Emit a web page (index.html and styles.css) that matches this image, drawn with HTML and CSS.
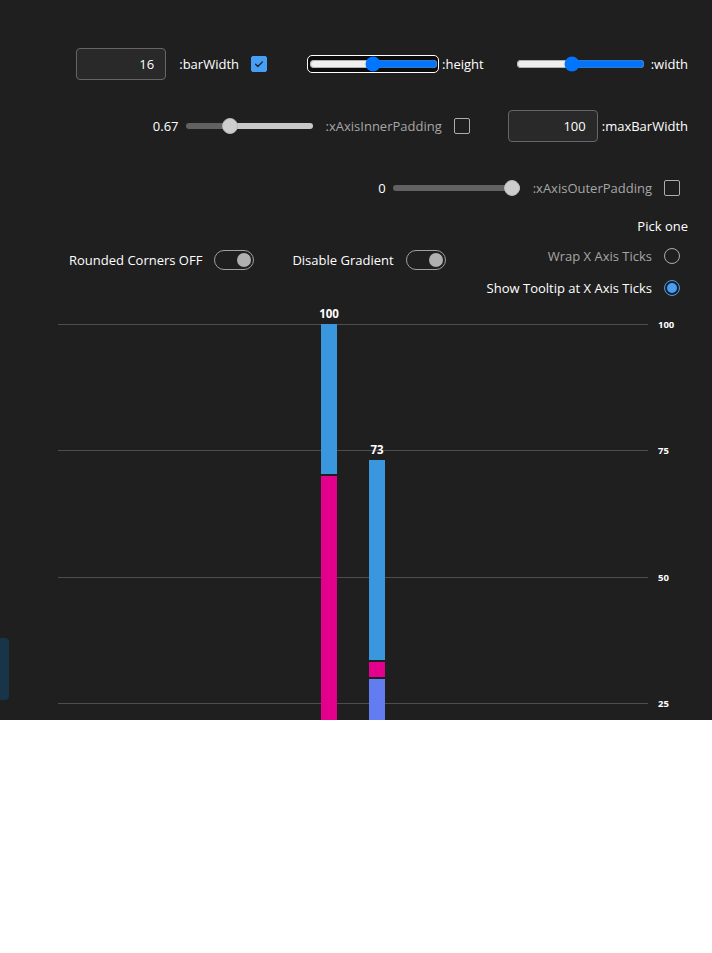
FILE: index.html
```html
<!DOCTYPE html>
<html lang="en" dir="rtl">
<head>
<meta charset="utf-8">
<title>Vertical stacked bar chart</title>
<link rel="stylesheet" href="styles.css">
</head>
<body>
<div class="page">
  <div class="controls">
    <div class="row row1">
      <div class="grp grp-w">
        <span class="lbl">width:</span>
        <input class="range" type="range" min="0" max="100" value="57">
      </div>
      <div class="grp grp-h">
        <span class="lbl">height:</span>
        <span class="focusring"><input class="range" type="range" min="0" max="100" value="50"></span>
      </div>
      <div class="grp grp-cb">
        <span class="cb checked"><svg viewBox="0 0 16 16" width="16" height="16"><path d="M4.6 8.3 L6.9 10.5 L11.4 5.9" fill="none" stroke="#1f1f1f" stroke-width="1.3" stroke-linecap="round" stroke-linejoin="round"/></svg></span>
        <span class="lbl">barWidth:</span>
        <input class="tf" type="text" value="16">
      </div>
    </div>

    <div class="row row2">
      <div class="grp">
        <span class="lbl">maxBarWidth:</span>
        <input class="tf" type="text" value="100">
      </div>
      <div class="grp grp-cb">
        <span class="cb"></span>
        <span class="lbl dim">xAxisInnerPadding:</span>
        <div class="fslider" style="--pos:44.6px"><div class="rail"></div><div class="thumb"></div></div>
        <span class="val">0.67</span>
      </div>
    </div>

    <div class="row row3">
      <div class="grp grp-cb">
        <span class="cb"></span>
        <span class="lbl dim">xAxisOuterPadding:</span>
        <div class="fslider" style="--pos:119px"><div class="rail"></div><div class="thumb"></div></div>
        <span class="val">0</span>
      </div>
    </div>

    <div class="row4">
      <div class="radiogroup">
        <div class="rg-label">Pick one</div>
        <div class="radio-opt">
          <span class="radio"></span>
          <span class="lbl dim">Wrap X Axis Ticks</span>
        </div>
        <div class="radio-opt">
          <span class="radio checked"><span class="dot"></span></span>
          <span class="lbl">Show Tooltip at X Axis Ticks</span>
        </div>
      </div>
      <div class="toggle toggle-first">
        <span class="switch"><span class="knob"></span></span>
        <span class="lbl">Disable Gradient</span>
      </div>
      <div class="toggle">
        <span class="switch"><span class="knob"></span></span>
        <span class="lbl">Rounded Corners OFF</span>
      </div>
    </div>
  </div>

  <svg class="chart" width="712" height="416" viewBox="0 0 712 416">
    <g class="grid">
      <line x1="58" y1="20.5" x2="648" y2="20.5"/>
      <line x1="58" y1="146.5" x2="648" y2="146.5"/>
      <line x1="58" y1="273.5" x2="648" y2="273.5"/>
      <line x1="58" y1="399.5" x2="648" y2="399.5"/>
    </g>
    <g class="yticks">
      <text x="658" y="20.5">100</text>
      <text x="658" y="146.5">75</text>
      <text x="658" y="273.5">50</text>
      <text x="658" y="399.5">25</text>
    </g>
    <g class="bar">
      <rect x="321" y="20" width="16" height="150" fill="#3a96dd"/>
      <rect x="321" y="172" width="16" height="244" fill="#e3008c"/>
    </g>
    <g class="bar">
      <rect x="369" y="156" width="16" height="200" fill="#3a96dd"/>
      <rect x="369" y="358" width="16" height="15" fill="#e3008c"/>
      <rect x="369" y="375" width="16" height="41" fill="#637cef"/>
    </g>
    <g class="barlabels">
      <text x="329" y="9">100</text>
      <text x="377" y="145">73</text>
    </g>
  </svg>

  <div class="sidetab"></div>
</div>
</body>
</html>
```

FILE: styles.css
```css
body {
  margin: 0;
  background: #ffffff;
  font-family: "Open Sans", "Noto Sans", sans-serif;
  font-size: 13px;
  line-height: 20px;
  color: #ffffff;
}

.page {
  position: relative;
  height: 720px;
  overflow: hidden;
  background: #1f1f1f;
}

.controls {
  padding: 48px 24px 0;
}

.row {
  display: flex;
  align-items: center;
  height: 32px;
  margin-bottom: 30px;
}

.row1 { gap: 32px; }
.row1 .grp-cb { margin-inline-start: 8px; }
.row2 { gap: 38px; }
.row3 { margin-bottom: 12px; padding-inline-start: 8px; }
.row3 .fslider { margin-inline-start: 2px; }

.grp {
  display: flex;
  align-items: center;
  gap: 4px;
}

.grp-w { gap: 6px; }
.grp-h { gap: 3px; }
.grp-cb { gap: 12px; }
.grp-cb .lbl + * { margin-inline-start: 1px; }
.grp-cb .val { margin-inline-start: -5px; }

.lbl { white-space: nowrap; }
.dim { color: #a6a6a6; }
.val { color: #ffffff; }

.range {
  width: 129px;
  height: 16px;
  margin: 0;
}

.focusring {
  display: inline-flex;
  border: 1.5px solid #ffffff;
  border-radius: 5px;
  background: #0b0b0b;
  padding: 0 0.5px;
}

.tf {
  box-sizing: border-box;
  width: 90px;
  height: 32px;
  margin: 0;
  padding: 0 11px;
  background: #292929;
  border: 1px solid #666666;
  border-radius: 4px;
  color: #ffffff;
  font-family: "Open Sans", "Noto Sans", sans-serif;
  font-size: 13px;
  outline: none;
}

.cb {
  box-sizing: border-box;
  display: inline-block;
  width: 16px;
  height: 16px;
  border: 1px solid #adadad;
  border-radius: 2px;
  flex: none;
}

.cb.checked {
  background: #479ef5;
  border-color: #479ef5;
}

.cb svg {
  display: block;
  margin: -1px;
}

.fslider {
  position: relative;
  width: 127px;
  height: 16px;
  flex: none;
}

.rail {
  margin-top: 5px;
  height: 6px;
  border-radius: 3px;
  background: linear-gradient(to right, #616161 var(--pos), #c8c8c8 var(--pos));
}

.thumb {
  position: absolute;
  top: 0;
  left: calc(var(--pos) - 8px);
  box-sizing: border-box;
  width: 16px;
  height: 16px;
  border-radius: 50%;
  background: #cdcdcd;
  border: 1px solid #b8b8b8;
}

.row4 {
  display: flex;
  align-items: center;
  gap: 38px;
}

.row4 .toggle-first { margin-inline-start: 3px; }

.rg-label {
  margin-bottom: 4px;
}

.radio-opt {
  display: flex;
  align-items: center;
  gap: 12px;
  height: 32px;
  padding-inline-start: 8px;
}

.radio {
  box-sizing: border-box;
  display: flex;
  align-items: center;
  justify-content: center;
  width: 16px;
  height: 16px;
  border: 1px solid #adadad;
  border-radius: 50%;
  flex: none;
}

.radio.checked { border-color: #479ef5; }

.radio .dot {
  width: 10px;
  height: 10px;
  border-radius: 50%;
  background: #479ef5;
}

.toggle {
  display: flex;
  align-items: center;
  gap: 12px;
}

.switch {
  box-sizing: border-box;
  display: flex;
  align-items: center;
  justify-content: flex-start;
  width: 40px;
  height: 20px;
  padding: 0 2px;
  border: 1px solid #a0a0a0;
  border-radius: 10px;
  flex: none;
}

.knob {
  width: 14px;
  height: 14px;
  border-radius: 50%;
  background: #b0b0b0;
}

.chart {
  display: block;
  direction: ltr;
}

.grid line {
  stroke: #4d4d4d;
  stroke-width: 1;
}

.yticks text {
  fill: #ffffff;
  font-family: "Open Sans", sans-serif;
  font-size: 9.5px;
  font-weight: 700;
  text-anchor: start;
  dominant-baseline: central;
}

.barlabels text {
  fill: #ffffff;
  font-family: "Open Sans", sans-serif;
  font-size: 11.5px;
  font-weight: 700;
  text-anchor: middle;
  dominant-baseline: central;
}

.sidetab {
  position: absolute;
  left: 0;
  top: 638px;
  width: 9px;
  height: 62px;
  background: #173449;
  border-radius: 0 4px 4px 0;
}
```
